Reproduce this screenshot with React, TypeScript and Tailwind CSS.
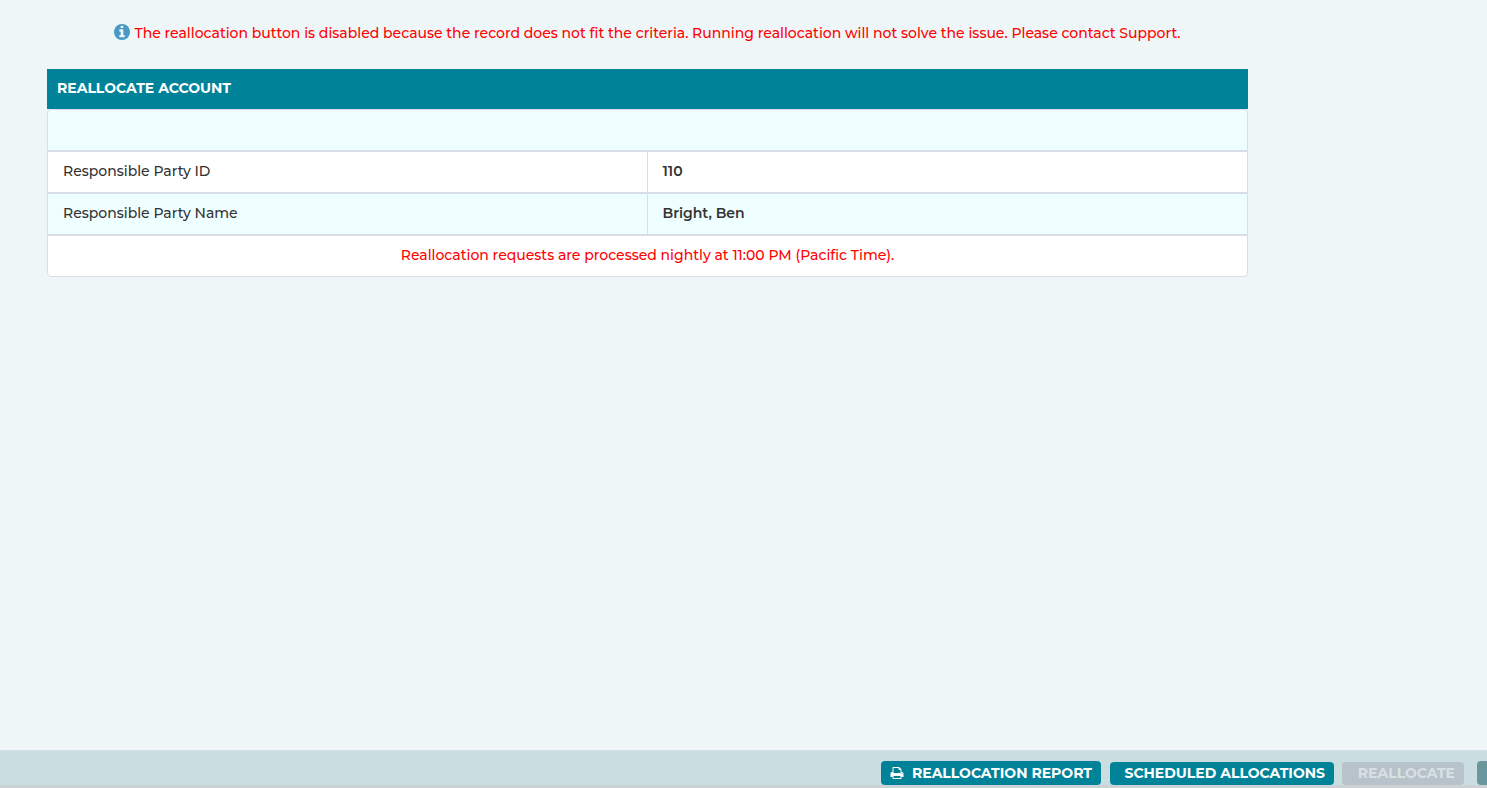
import type { ReactNode } from "react";

function InfoIcon() {
  return (
    <svg
      viewBox="128 128 1536 1536"
      fill="currentColor"
      aria-hidden="true"
      className="mt-px mr-1 size-4 shrink-0 text-[#4899c4]"
    >
      <path d="M1152 1376v-160q0-14-9-23t-23-9h-96v-512q0-14-9-23t-23-9h-320q-14 0-23 9t-9 23v160q0 14 9 23t23 9h96v320h-96q-14 0-23 9t-9 23v160q0 14 9 23t23 9h448q14 0 23-9t9-23zm-128-896v-160q0-14-9-23t-23-9h-192q-14 0-23 9t-9 23v160q0 14 9 23t23 9h192q14 0 23-9t9-23zm640 416q0 209-103 385.5t-279.5 279.5-385.5 103-385.5-103-279.5-279.5-103-385.5 103-385.5 279.5-279.5 385.5-103 385.5 103 279.5 279.5 103 385.5z" />
    </svg>
  );
}

function PrintIcon() {
  return (
    <svg
      viewBox="0 128 1664 1536"
      fill="currentColor"
      aria-hidden="true"
      className="h-3 w-[14px] shrink-0"
    >
      <path d="M384 1536h896v-256h-896v256zm0-640h896v-384h-160q-40 0-68-28t-28-68v-160h-640v640zm1152 64q0-26-19-45t-45-19-45 19-19 45 19 45 45 19 45-19 19-45zm128 0v416q0 13-9.5 22.5t-22.5 9.5h-224v160q0 40-28 68t-68 28h-960q-40 0-68-28t-28-68v-160h-224q-13 0-22.5-9.5t-9.5-22.5v-416q0-79 56.5-135.5t135.5-56.5h64v-544q0-40 28-68t68-28h672q40 0 88 20t76 48l152 152q28 28 48 76t20 88v256h64q79 0 135.5 56.5t56.5 135.5z" />
    </svg>
  );
}

function DetailRow({
  label,
  children,
  shaded = false,
}: {
  label: string;
  children: ReactNode;
  shaded?: boolean;
}) {
  return (
    <tr className={shaded ? "bg-[#effeff]" : "bg-white"}>
      <th
        scope="row"
        className="h-[42px] w-1/2 border border-[#d9dde7] px-[15px] pb-[3px] text-left font-medium"
      >
        {label}
      </th>
      <td className="h-[42px] w-1/2 border-y border-r border-[#d9dde7] px-[15px] pb-[3px] font-semibold">
        {children}
      </td>
    </tr>
  );
}

export default function App() {
  return (
    <div className="flex min-h-screen flex-col bg-[#eef6f8] font-['Montserrat','Inter',sans-serif] text-sm leading-5 font-medium text-[#333333]">
      <main className="mr-[239px] ml-[47px] flex-1">
        <p className="flex items-start justify-center pt-[23px] text-[#ff0000]">
          <InfoIcon />
          <span>
            The reallocation button is disabled because the record does not fit
            the criteria. Running reallocation will not solve the issue. Please
            contact Support.
          </span>
        </p>

        <h1 className="mt-[26px] bg-[#008299] px-[10px] pt-[9px] pb-[11px] font-bold text-white">
          REALLOCATE ACCOUNT
        </h1>
        <table className="w-full table-fixed border-separate border-spacing-0">
          <tbody>
            <tr>
              <td
                colSpan={2}
                className="h-[42px] rounded-t border border-[#d9dde7] bg-[#effeff]"
              />
            </tr>
            <DetailRow label="Responsible Party ID">110</DetailRow>
            <DetailRow label="Responsible Party Name" shaded>
              Bright, Ben
            </DetailRow>
            <tr>
              <td
                colSpan={2}
                className="h-[42px] rounded-b border border-[#d9dde7] bg-white pb-[3px] text-center text-[#ff0000]"
              >
                Reallocation requests are processed nightly at 11:00 PM (Pacific
                Time).
              </td>
            </tr>
          </tbody>
        </table>
      </main>

      <footer className="flex items-end justify-end border-t border-b-[3px] border-t-[#d5dde6] border-b-[#cdd2d6] bg-[#cadde0] pt-[10px] font-bold whitespace-nowrap">
        <button
          type="button"
          className="mr-[9px] flex h-6 w-[220px] items-center rounded bg-[#008299] px-[9px] text-white"
        >
          <PrintIcon />
          <span className="flex-1 text-right">REALLOCATION REPORT</span>
        </button>
        <button
          type="button"
          className="mr-2 h-[23px] w-[224px] rounded bg-[#008299] px-[9px] pb-[2px] text-right text-white"
        >
          SCHEDULED ALLOCATIONS
        </button>
        <button
          type="button"
          disabled
          className="mr-[13px] h-[23px] w-[122px] rounded bg-[#b7c2ca] px-[9px] pb-[2px] text-right text-[#d9e0e4]"
        >
          REALLOCATE
        </button>
        <button
          type="button"
          aria-label="More"
          className="h-6 w-[10px] rounded-l bg-[#6a969d]"
        />
      </footer>
    </div>
  );
}
